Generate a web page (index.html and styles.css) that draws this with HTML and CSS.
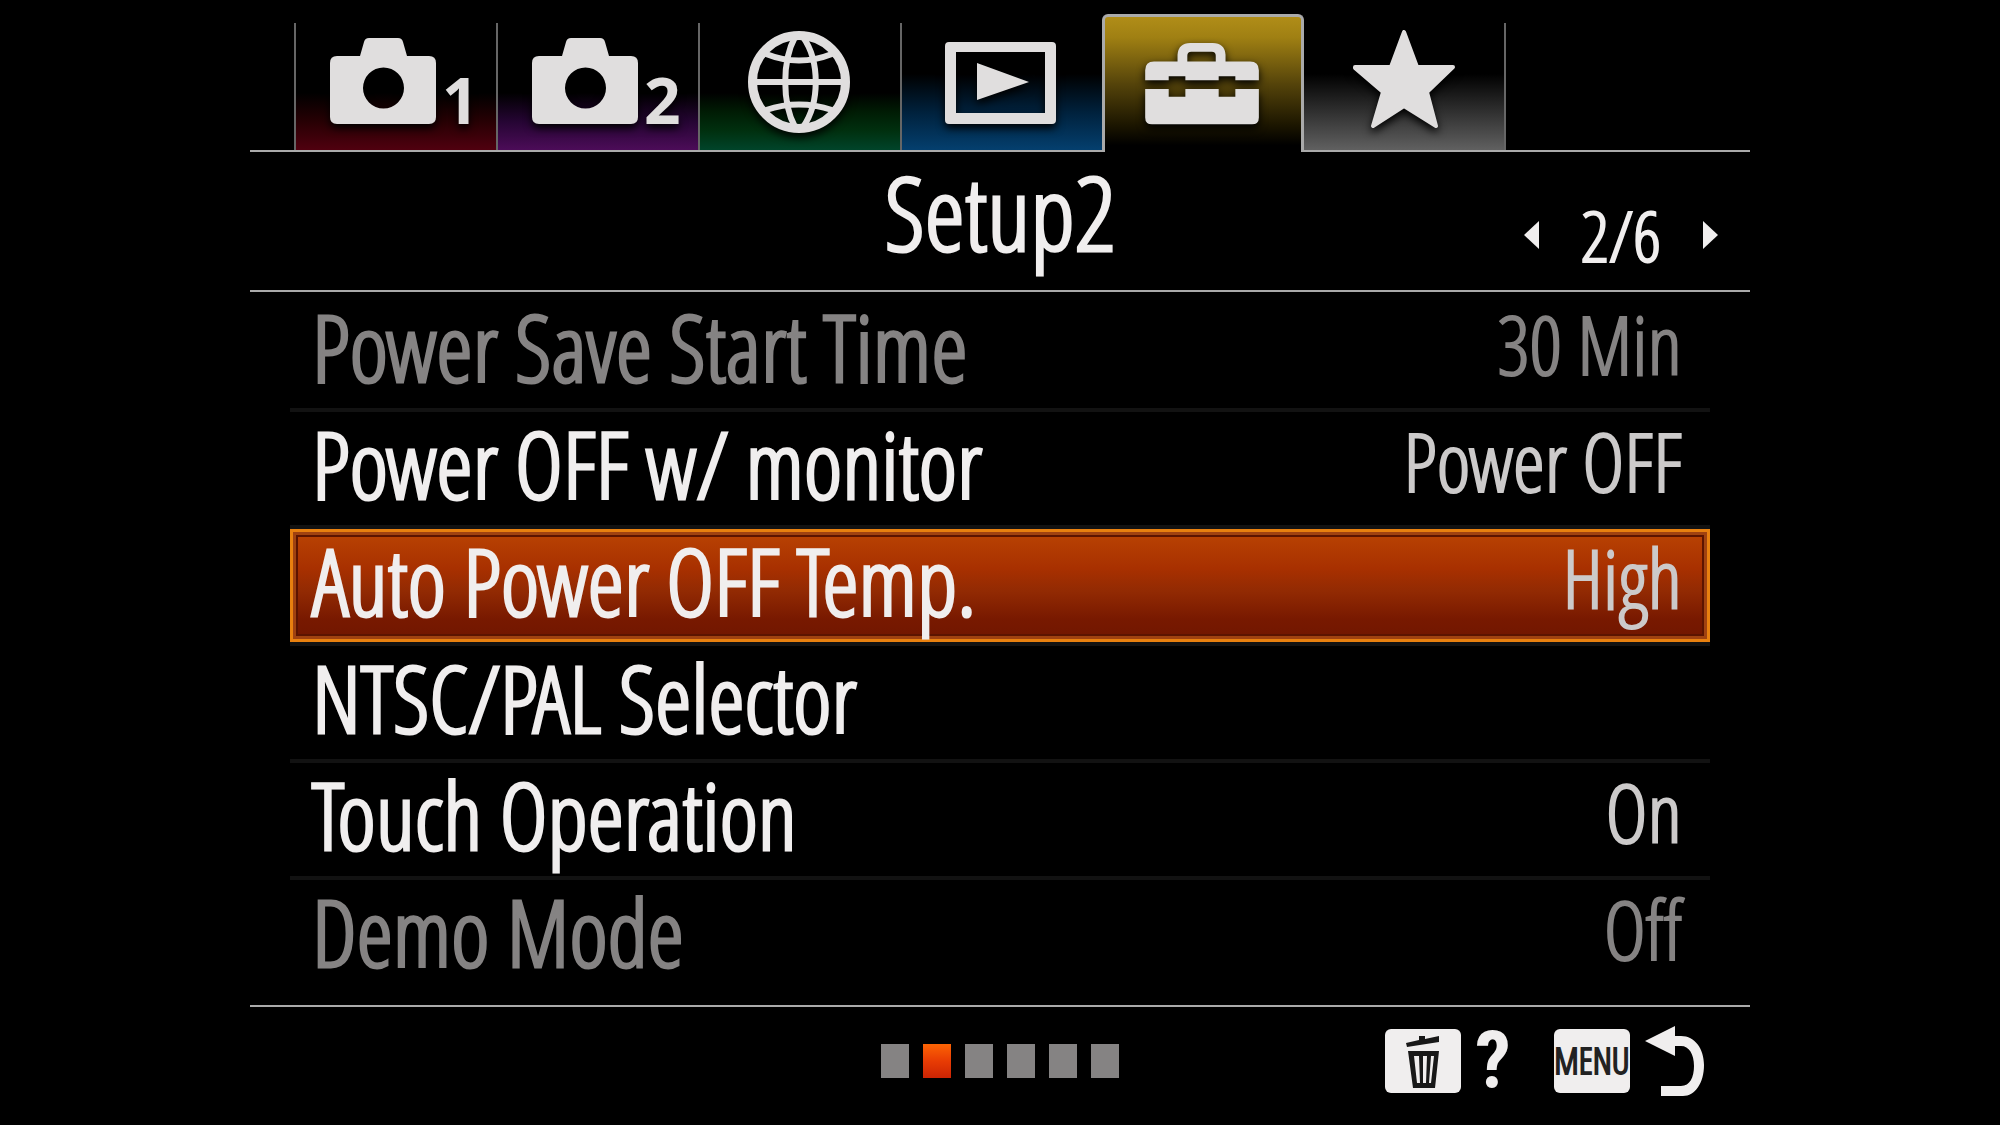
FILE: index.html
```html
<!DOCTYPE html>
<html lang="en">
<head>
<meta charset="utf-8">
<title>Setup2</title>
<link rel="stylesheet" href="styles.css">
</head>
<body>
<main class="menu">
  <nav class="tabs" aria-label="Menu groups">
    <button class="tab tab-red" type="button" aria-label="Camera settings 1">
      <svg class="icon" viewBox="0 0 200 128"><path fill-rule="evenodd" d="M41 33H64L68 19Q69 15 73 15H102Q106 15 107 19L111 33H133Q140 33 140 40V94Q140 101 133 101H41Q34 101 34 94V40Q34 33 41 33ZM87.500 44.500A20.500 20.500 0 1 0 87.500 85.500A20.500 20.500 0 1 0 87.500 44.500Z"/><text class="digit" x="146" y="101">1</text></svg>
    </button>
    <button class="tab tab-purple" type="button" aria-label="Camera settings 2">
      <svg class="icon" viewBox="0 0 200 128"><path fill-rule="evenodd" d="M41 33H64L68 19Q69 15 73 15H102Q106 15 107 19L111 33H133Q140 33 140 40V94Q140 101 133 101H41Q34 101 34 94V40Q34 33 41 33ZM87.500 44.500A20.500 20.500 0 1 0 87.500 85.500A20.500 20.500 0 1 0 87.500 44.500Z"/><text class="digit" x="146" y="101">2</text></svg>
    </button>
    <button class="tab tab-green" type="button" aria-label="Network">
      <svg class="icon icon-line" viewBox="0 0 200 128"><circle cx="99" cy="59" r="46.500" stroke-width="9"/><path stroke-width="6" d="M54 59H144M66 31Q99 44 132 31M66 87Q99 76 132 87M95 14C82 38 82 80 95 104M103 14C120 38 120 80 103 104"/></svg>
    </button>
    <button class="tab tab-blue" type="button" aria-label="Playback">
      <svg class="icon" viewBox="0 0 200 128"><path fill-rule="evenodd" d="M47 19H150Q154 19 154 23V97Q154 101 150 101H47Q43 101 43 97V23Q43 19 47 19ZM54 29V90H143V29ZM75 40L127 59L75 77Z"/></svg>
    </button>
    <button class="tab tab-gold" type="button" aria-label="Setup" aria-current="true">
      <svg class="icon" viewBox="0 0 200 128"><path fill-rule="evenodd" d="M41 56V46Q41 37 50 37H74V30Q75 18 87 18H110Q122 18 123 30V37H148Q157 37 157 46V56H133V52H116V56H82V52H65V56ZM84 37H113V31Q113 27 109 27H88Q84 27 84 31ZM41 65H65V73H82V65H116V73H133V65H157V94Q157 101 150 101H48Q41 101 41 94Z"/></svg>
    </button>
    <button class="tab tab-gray" type="button" aria-label="My Menu">
      <svg class="icon" viewBox="0 0 200 128"><path class="star" d="M100 9L113 44H149L123 69L132 103L100 83L69 103L79 69L51 45L51 44H87Z"/></svg>
    </button>
  </nav>

  <header class="heading">
    <h1 class="title">Setup2</h1>
    <div class="pager">
      <button class="step" type="button" aria-label="Previous page"><svg width="15" height="28" viewBox="0 0 15 28"><path d="M15 0V28L0 14Z"/></svg></button>
      <span class="count">2/6</span>
      <button class="step" type="button" aria-label="Next page"><svg width="15" height="28" viewBox="0 0 15 28"><path d="M0 0V28L15 14Z"/></svg></button>
    </div>
  </header>

  <ul class="items">
    <li class="item"><button class="row" type="button" disabled><span class="label">Power Save Start Time</span><span class="value">30 Min</span></button></li>
    <li class="item"><button class="row" type="button"><span class="label">Power OFF w/ monitor</span><span class="value">Power OFF</span></button></li>
    <li class="item"><button class="row row-selected" type="button"><span class="label">Auto Power OFF Temp.</span><span class="value">High</span></button></li>
    <li class="item"><button class="row" type="button"><span class="label">NTSC/PAL Selector</span></button></li>
    <li class="item"><button class="row" type="button"><span class="label">Touch Operation</span><span class="value">On</span></button></li>
    <li class="item"><button class="row" type="button" disabled><span class="label">Demo Mode</span><span class="value">Off</span></button></li>
  </ul>

  <footer class="footer">
    <div class="dots">
      <span class="dot"></span><span class="dot dot-on"></span><span class="dot"></span><span class="dot"></span><span class="dot"></span><span class="dot"></span>
    </div>
    <div class="keys">
      <button class="key" type="button" aria-label="Help"><span class="cap"><svg width="76" height="64" viewBox="0 0 76 64"><path class="ink" d="M21 14L34 11V7H40V10L54 7V13L22 18Z"/><path class="ink" fill-rule="evenodd" d="M23 22H54L50 59H28ZM29 27L32 54H35L34 27ZM38 27V54H41L42 27ZM46 27L44 54H46L49 27Z"/></svg></span><span class="hint">?</span></button>
      <button class="key" type="button" aria-label="Menu, back"><span class="cap cap-text">MENU</span><svg class="back" width="62" height="72" viewBox="0 0 62 72"><path d="M1 16L31 1V11H37C51 11 60 24 60 40C60 58 51 71 39 71H17V61H37C46 61 50 52 50 41C50 29 45 21 37 21H31V31Z"/></svg></button>
    </div>
  </footer>
</main>
</body>
</html>
```
FILE: styles.css
```css
* { box-sizing: border-box; }

body {
  margin: 0;
  background: #000;
  color: #f0eeee;
  font-family: "Open Sans Condensed Light", "Roboto Condensed", "Liberation Sans", sans-serif;
  font-weight: 300;
}

button {
  margin: 0;
  padding: 0;
  border: 0;
  background: none;
  color: inherit;
  font: inherit;
}

svg { display: block; fill: #f0eeee; }

.menu { width: 75%; margin: 0 auto; }

/* Tab strip */
.tabs {
  display: flex;
  align-items: flex-end;
  padding: 14px 44px 0;
  border-bottom: 2px solid #aaa;
}

.tab {
  flex: 0 1 202px;
  height: 127px;
  border-left: 2px solid #666;
}

.icon {
  width: 100%;
  height: 128px;
  fill: #e0dede;
  filter: drop-shadow(0 4px 4px #000);
}

.icon-line { fill: none; stroke: #e0dede; }
.star { stroke: #e0dede; stroke-width: 4px; stroke-linejoin: round; }
.digit { font: 700 64px "Noto Sans", sans-serif; }

.tab-red { background: linear-gradient(#000 55%, #280004 78%, #50000f); }
.tab-purple { background: linear-gradient(#000 55%, #260534 78%, #4c0c58); }
.tab-green { background: linear-gradient(#000 55%, #001c04 70%, #00300f 85%, #00442a); }
.tab-blue { background: linear-gradient(#000 40%, #00213c 70%, #043f6e); }

.tab-gold {
  height: 138px;
  margin-bottom: -2px;
  padding-top: 7px;
  border: 3px solid #aaa;
  border-bottom: 0;
  border-radius: 6px 6px 0 0;
  background: linear-gradient(#b08d18, #a08013 15%, #54430a 50%, #1c1600 80%, #000 95%);
}

.tab-gray {
  border-left: 0;
  border-right: 2px solid #666;
  background: linear-gradient(#000 40%, #303030 70%, #606060);
}

/* Title and page count */
.heading {
  display: grid;
  grid-template-columns: 1fr auto 1fr;
  padding: 0 32px;
  border-bottom: 2px solid #aaa;
}

.title {
  grid-column: 2;
  margin: 0;
  font-size: 102px;
  font-weight: 300;
  line-height: 120px;
  padding-bottom: 18px;
  -webkit-text-stroke: 3px;
}

.pager {
  display: flex;
  justify-content: flex-end;
  align-items: center;
  gap: 42px;
  padding-top: 28px;
}

.count { font-size: 70px; line-height: 80px; -webkit-text-stroke: 2px; }

/* Settings list */
.items {
  margin: 0;
  padding: 3px 40px 8px;
  border-bottom: 2px solid #aaa;
  list-style: none;
}

.item { border-bottom: 4px solid #121212; }
.item:last-child { border-bottom-color: #000; }

.row {
  display: flex;
  justify-content: space-between;
  align-items: flex-start;
  width: 100%;
  height: 113px;
  padding: 0 28px 0 22px;
  white-space: nowrap;
}

.row:disabled { color: #858383; }
.label { font-size: 92px; line-height: 104px; -webkit-text-stroke: 3px; }
.value { color: #cccaca; font-size: 81px; line-height: 98px; -webkit-text-stroke: 2px; }
.row:disabled .value { color: inherit; }

.row-selected {
  background: linear-gradient(#bb4503, #a83000 35%, #922a03 55%, #781900 80%, #701600);
  box-shadow: inset 0 0 0 3px #e8800f, inset 0 0 0 6px #a04210, inset 0 0 0 8px #5c1400;
}

/* Page dots and key hints */
.footer {
  display: grid;
  grid-template-columns: 1fr auto 1fr;
  align-items: center;
  padding: 18px 44px;
}

.dots { grid-column: 2; display: flex; gap: 14px; }
.dot { width: 28px; height: 34px; background: #858383; }
.dot-on { background: linear-gradient(#fc6404, #e83c04 50%, #cc2404); }

.keys { display: flex; justify-content: flex-end; gap: 48px; }
.key { display: flex; align-items: center; gap: 14px; }

.cap { width: 76px; height: 64px; border-radius: 6px; background: #f0eeee; }
.cap-text { color: #222; font-size: 36px; line-height: 64px; -webkit-text-stroke: 2px; }
.ink { fill: #181818; }

.hint {
  width: 31px;
  font-family: "Roboto Condensed", sans-serif;
  font-size: 80px;
  font-weight: 700;
  line-height: 64px;
}
```
